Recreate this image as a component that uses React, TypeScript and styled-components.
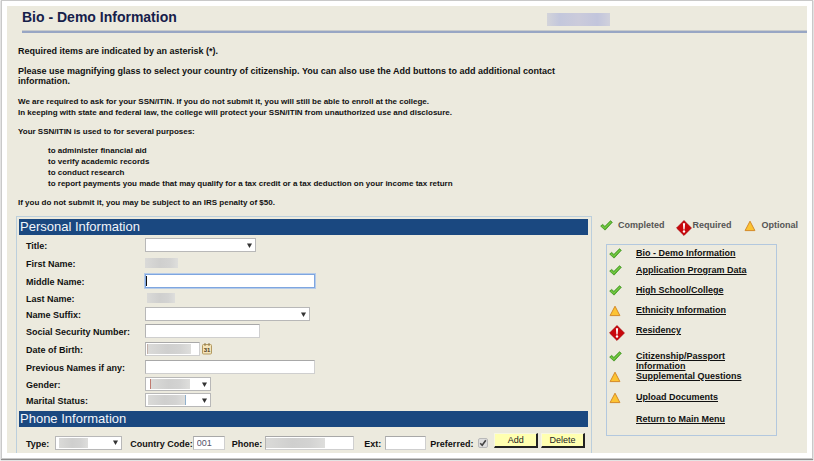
import React from "react";
import styled, { createGlobalStyle, css } from "styled-components";

const GlobalStyle = createGlobalStyle`
  *, *::before, *::after { box-sizing: border-box; }
  html, body { margin: 0; background: #f4f4f4; }
  body { font-family: "Liberation Sans", Arial, sans-serif; font-size: 9px; line-height: 10px; color: #111; }
`;

const Window = styled.div`
  display: flex;
  min-height: calc(100vh - 4px);
  margin: 1px 2px 3px;
  padding: 5px;
  background: #fff;
  box-shadow: 0 0 0 1px #c9c9c9, 0 1px 1px 1px #8c8c8c;
`;

const Page = styled.div`
  flex: 1;
  min-width: 0;
  display: flex;
  flex-direction: column;
  background: #eceade;
`;

const Header = styled.header`
  display: flex;
  align-items: flex-start;
  justify-content: space-between;
  height: 27px;
  margin-left: 15px;
  padding: 3px 197px 0 0;
  border-bottom: 2px solid #98a6c4;
  box-shadow: inset 0 -1px #c8cbcb;
`;

const Title = styled.h1`
  margin: 0;
  font-size: 14px;
  line-height: 16px;
  color: #16204a;
`;

const UserBadge = styled.div`
  width: 63px;
  height: 13px;
  margin-top: 4px;
  background: linear-gradient(90deg, #d3d4da, #c3c7dc 20%, #cbcbdb 50%, #c2c5dc 80%, #d0d1dc);
`;

const Intro = styled.section`
  display: flex;
  flex-direction: column;
  gap: 10px;
  max-width: 564px;
  padding: 13px 0 8px 11px;
  font-weight: bold;
`;

const Disclosure = styled.div`
  display: flex;
  flex-direction: column;
  gap: 8px;
  font-size: 8px;
  line-height: 11px;
`;

const Para = styled.p`
  margin: 0;
`;

const Purposes = styled.ul`
  margin: 0;
  padding: 0 0 0 30px;
  list-style: none;
`;

const Columns = styled.div`
  flex: 1;
  display: grid;
  grid-template-columns: minmax(0, 1fr) 208px;
  gap: 7px;
`;

const Panel = styled.form`
  margin-left: 9px;
  padding: 2px 3px 0 2px;
  border: 1px solid #bccfdc;
  border-bottom: 0;
`;

const SectionTitle = styled.h2`
  margin: 0;
  padding-left: 1px;
  height: 16px;
  background: #1a4880;
  color: #f2f5fa;
  font-size: 13px;
  font-weight: normal;
  line-height: 16px;
`;

const Rows = styled.div`
  padding: 1px 0 3px 7px;
`;

const Row = styled.div<{ $compact?: boolean }>`
  display: grid;
  grid-template-columns: 119px minmax(0, 1fr);
  align-items: center;
  height: ${(p) => (p.$compact ? "16px" : "18px")};
`;

const labelText = css`
  padding-top: 2px;
  font-weight: bold;
  white-space: nowrap;
`;
const Label = styled.label`${labelText}`;
const Caption = styled.span`${labelText}`;

const Line = styled.div`
  display: flex;
  align-items: center;
  gap: 2px;
`;

const Stack = styled.div<{ $width: number }>`
  display: grid;
  align-items: center;
  width: ${(p) => p.$width}px;
  height: 14px;
  > * { grid-area: 1 / 1; }
`;

const control = css`
  width: 100%;
  height: 14px;
  margin: 0;
  padding: 0 3px;
  border: 1px solid #cfcfcf;
  border-top-color: #a8a8a8;
  border-left-color: #b4b4b4;
  border-radius: 0;
  background: #fff;
  color: #555068;
  font: 9px "Liberation Sans", Arial, sans-serif;
  outline: none;
`;
const TextInput = styled.input<{ $active?: boolean }>`
  ${control}
  ${(p) => p.$active && css`border-color: #7ea6e0; box-shadow: 0 0 0 1px #b5cbe9;`}
`;
const SelectBox = styled.select`
  ${control}
  appearance: none;
  border-color: #b8b8b8;
`;
const Arrow = styled.svg`
  justify-self: end;
  width: 5px;
  height: 5px;
  margin-right: 4px;
  pointer-events: none;
`;
const Caret = styled.span`
  width: 1px;
  height: 10px;
  margin-left: 1px;
  background: #111;
`;

const Redacted = styled.span<{ $width: number; $indent?: number; $start?: string; $end?: string }>`
  display: block;
  width: ${(p) => p.$width}px;
  height: 10px;
  margin-left: ${(p) => p.$indent ?? 0}px;
  background: linear-gradient(90deg, #dadad8, #cfcfce 45%, #d3d3d2 75%, #dededc);
  border-left: ${(p) => (p.$start ? `1px solid ${p.$start}` : "0")};
  border-right: ${(p) => (p.$end ? `1px solid ${p.$end}` : "0")};
  pointer-events: none;
`;

const PickerButton = styled.button`
  display: flex;
  padding: 0;
  border: 0;
  background: none;
`;

const PhoneRow = styled.div`
  display: flex;
  align-items: center;
  padding: 6px 0 0 7px;
`;
const PhoneField = styled.div<{ $gap: number; $after: number }>`
  display: flex;
  align-items: center;
  gap: ${(p) => p.$gap}px;
  margin-right: ${(p) => p.$after}px;
`;
const Check = styled.input`
  appearance: none;
  width: 10px;
  height: 10px;
  margin: 0;
  border: 1px solid #b9b9b9;
  border-radius: 2px;
  background: #dedede;
`;
const CheckStack = styled.span`
  display: grid;
  > * { grid-area: 1 / 1; }
  svg { pointer-events: none; }
`;
const PushButton = styled.button`
  width: 44px;
  height: 15px;
  margin: 0 3px 4px 0;
  padding: 0;
  border: 1px solid #f7f7e2;
  border-right: 2px solid #222;
  border-bottom: 2px solid #222;
  background: #ffffb0;
  color: #222;
  font: 9px/11px "Liberation Sans", Arial, sans-serif;
`;

const Side = styled.aside`
  font-weight: bold;
`;
const Legend = styled.div`
  display: flex;
  height: 28px;
  padding-left: 1px;
  color: #555;
`;
const LegendItem = styled.div<{ $gap: number; $after: number }>`
  display: flex;
  align-items: flex-start;
  gap: ${(p) => p.$gap}px;
  margin-right: ${(p) => p.$after}px;
  padding-top: 4px;
  > svg { margin-top: 0; }
`;
const Steps = styled.nav`
  margin: 0 30px 0 7px;
  padding: 3px 0 10px 2px;
  border: 1px solid #b3c8de;
`;
const Step = styled.div<{ $space: number }>`
  display: grid;
  grid-template-columns: 27px minmax(0, 114px);
  align-items: start;
  min-height: ${(p) => p.$space}px;
`;
const IconCell = styled.span`
  display: flex;
  align-items: flex-start;
  height: 10px;
`;
const StepLink = styled.a`
  color: #111;
  text-decoration: underline;
`;

type Status = "done" | "required" | "optional" | "none";

const StatusIcon = ({ status }: { status: Status }) => {
  if (status === "done")
    return (
      <svg width="13" height="11" viewBox="0 0 13 11" aria-hidden="true">
        <path d="M.7 6.1 2.6 4.4l2.3 2L10.5.8l1.8 1.5-7.2 7.8z" fill="#5cb82e" stroke="#3d9420" strokeWidth=".8" strokeLinejoin="round" />
        <path d="m2 6 2.8 2.2 6-6.1" fill="none" stroke="#83d04f" strokeWidth=".8" />
      </svg>
    );
  if (status === "required")
    return (
      <svg width="16" height="16" viewBox="0 0 16 16" aria-hidden="true">
        <path d="m8 .6 7.4 7.4L8 15.4.6 8z" fill="#c9070b" stroke="#a90509" strokeWidth=".8" strokeLinejoin="round" />
        <path d="M6.9 3.2h2.2l-.5 6.2H7.4z" fill="#fff" />
        <circle cx="8" cy="11.5" r="1.2" fill="#fff" />
      </svg>
    );
  if (status === "optional")
    return (
      <svg width="12" height="12" viewBox="0 0 12 12" aria-hidden="true">
        <path d="M6 1.2 10.9 10.6H1.1z" fill="#fcc332" stroke="#d48a28" strokeWidth="1" strokeLinejoin="round" />
      </svg>
    );
  return null;
};

const STEPS: { name: string; status: Status; space: number }[] = [
  { name: "Bio - Demo Information", status: "done", space: 17 },
  { name: "Application Program Data", status: "done", space: 20 },
  { name: "High School/College", status: "done", space: 20 },
  { name: "Ethnicity Information", status: "optional", space: 20 },
  { name: "Residency", status: "required", space: 26 },
  { name: "Citizenship/Passport Information", status: "done", space: 20 },
  { name: "Supplemental Questions", status: "optional", space: 21 },
  { name: "Upload Documents", status: "optional", space: 22 },
  { name: "Return to Main Menu", status: "none", space: 11 },
];

const Select = ({ id, width, children }: { id: string; width: number; children?: React.ReactNode }) => (
  <Stack $width={width}>
    <SelectBox id={id}>
      <option value="" />
    </SelectBox>
    {children}
    <Arrow viewBox="0 0 5 5" aria-hidden="true">
      <path d="M0 .5h5L2.5 5z" fill="#333" />
    </Arrow>
  </Stack>
);

const Field = ({ id, label, compact, children }: { id: string; label: string; compact?: boolean; children: React.ReactNode }) => (
  <Row $compact={compact}>
    <Label htmlFor={id}>{label}</Label>
    <Line>{children}</Line>
  </Row>
);

export default function App() {
  return (
    <>
      <GlobalStyle />
      <Window>
        <Page>
          <Header>
            <Title>Bio - Demo Information</Title>
            <UserBadge />
          </Header>
          <Intro>
            <Para>Required items are indicated by an asterisk (*).</Para>
            <Para>
              Please use magnifying glass to select your country of citizenship. You can also use the Add buttons to add
              additional contact information.
            </Para>
            <Disclosure>
              <Para>
                We are required to ask for your SSN/ITIN. If you do not submit it, you will still be able to enroll at
                the college.
                <br />
                In keeping with state and federal law, the college will protect your SSN/ITIN from unauthorized use and
                disclosure.
              </Para>
              <Para>Your SSN/ITIN is used to for several purposes:</Para>
              <Purposes>
                <li>to administer financial aid</li>
                <li>to verify academic records</li>
                <li>to conduct research</li>
                <li>
                  to report payments you made that may qualify for a tax credit or a tax deduction on your income tax
                  return
                </li>
              </Purposes>
              <Para>If you do not submit it, you may be subject to an IRS penalty of $50.</Para>
            </Disclosure>
          </Intro>
          <Columns>
            <Panel onSubmit={(e) => e.preventDefault()}>
              <SectionTitle>Personal Information</SectionTitle>
              <Rows>
                <Field id="title" label="Title:">
                  <Select id="title" width={111} />
                </Field>
                <Row>
                  <Caption>First Name:</Caption>
                  <Redacted $width={33} />
                </Row>
                <Field id="middle" label="Middle Name:">
                  <Stack $width={170}>
                    <TextInput id="middle" $active />
                    <Caret />
                  </Stack>
                </Field>
                <Row $compact>
                  <Caption>Last Name:</Caption>
                  <Redacted $width={28} $indent={2} />
                </Row>
                <Field id="suffix" label="Name Suffix:" compact>
                  <Select id="suffix" width={165} />
                </Field>
                <Field id="ssn" label="Social Security Number:">
                  <Stack $width={115}>
                    <TextInput id="ssn" />
                  </Stack>
                </Field>
                <Field id="dob" label="Date of Birth:">
                  <Stack $width={55}>
                    <TextInput id="dob" />
                    <Redacted $width={44} $indent={2} $start="#c4b0a8" />
                  </Stack>
                  <PickerButton type="button" aria-label="Choose date">
                    <svg width="10" height="12" viewBox="0 0 10 12" aria-hidden="true">
                      <rect x=".5" y="1.5" width="9" height="9.5" rx="1" fill="#f5e4b8" stroke="#b39a62" />
                      <path d="M3 0v3M7 0v3" stroke="#8f7a4c" />
                      <text x="5" y="9" textAnchor="middle" fontSize="6" fontWeight="bold" fill="#4a3a1c">31</text>
                    </svg>
                  </PickerButton>
                </Field>
                <Field id="previous" label="Previous Names if any:">
                  <Stack $width={170}>
                    <TextInput id="previous" />
                  </Stack>
                </Field>
                <Field id="gender" label="Gender:" compact>
                  <Select id="gender" width={66}>
                    <Redacted $width={40} $indent={5} $start="#c07a70" />
                  </Select>
                </Field>
                <Field id="marital" label="Marital Status:" compact>
                  <Select id="marital" width={66}>
                    <Redacted $width={38} $indent={3} $end="#8fb0cc" />
                  </Select>
                </Field>
              </Rows>
              <SectionTitle>Phone Information</SectionTitle>
              <PhoneRow>
                <PhoneField $gap={6} $after={8}>
                  <Label htmlFor="type">Type:</Label>
                  <Select id="type" width={67}>
                    <Redacted $width={29} $indent={4} />
                  </Select>
                </PhoneField>
                <PhoneField $gap={0} $after={7}>
                  <Label htmlFor="country">Country Code:</Label>
                  <Stack $width={32}>
                    <TextInput id="country" defaultValue="001" />
                  </Stack>
                </PhoneField>
                <PhoneField $gap={3} $after={10}>
                  <Label htmlFor="phone">Phone:</Label>
                  <Stack $width={89}>
                    <TextInput id="phone" />
                    <Redacted $width={59} $indent={1} />
                  </Stack>
                </PhoneField>
                <PhoneField $gap={4} $after={4}>
                  <Label htmlFor="ext">Ext:</Label>
                  <Stack $width={41}>
                    <TextInput id="ext" />
                  </Stack>
                </PhoneField>
                <PhoneField $gap={5} $after={6}>
                  <Label htmlFor="preferred">Preferred:</Label>
                  <CheckStack>
                    <Check id="preferred" type="checkbox" defaultChecked />
                    <svg width="10" height="10" viewBox="0 0 10 10" aria-hidden="true">
                      <path d="m2.2 5.2 2 2 3.6-5" fill="none" stroke="#444" strokeWidth="1.6" />
                    </svg>
                  </CheckStack>
                </PhoneField>
                <PushButton type="button">Add</PushButton>
                <PushButton type="button">Delete</PushButton>
              </PhoneRow>
            </Panel>
            <Side>
              <Legend>
                <LegendItem $gap={5} $after={11}>
                  <StatusIcon status="done" />
                  Completed
                </LegendItem>
                <LegendItem $gap={1} $after={12}>
                  <StatusIcon status="required" />
                  Required
                </LegendItem>
                <LegendItem $gap={6} $after={0}>
                  <StatusIcon status="optional" />
                  Optional
                </LegendItem>
              </Legend>
              <Steps>
                {STEPS.map((s) => (
                  <Step key={s.name} $space={s.space}>
                    <IconCell>
                      <StatusIcon status={s.status} />
                    </IconCell>
                    <StepLink href="#">{s.name}</StepLink>
                  </Step>
                ))}
              </Steps>
            </Side>
          </Columns>
        </Page>
      </Window>
    </>
  );
}
